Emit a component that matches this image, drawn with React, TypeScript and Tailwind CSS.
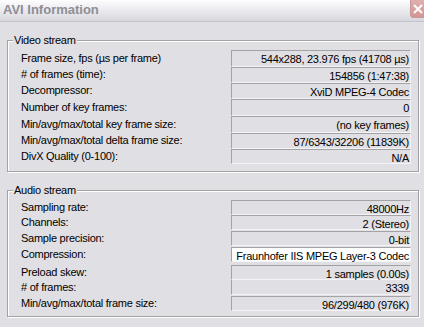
import React from "react";

type Row = {
    label: string;
    value: string;
    h: string;
    mt?: string;
    white?: boolean;
    partialTop?: boolean;
};

const videoRows: Row[] = [
    { label: "Frame size, fps (µs per frame)", value: "544x288, 23.976 fps (41708 µs)", h: "h-[17px]" },
    { label: "# of frames (time):", value: "154856 (1:47:38)", h: "h-[16px]" },
    { label: "Decompressor:", value: "XviD MPEG-4 Codec", h: "h-[16px]" },
    { label: "Number of key frames:", value: "0", h: "h-[17px]" },
    { label: "Min/avg/max/total key frame size:", value: "(no key frames)", h: "h-[17px]" },
    { label: "Min/avg/max/total delta frame size:", value: "87/6343/32206 (11839K)", h: "h-[16px]" },
    { label: "DivX Quality (0-100):", value: "N/A", h: "h-[15px]" },
];

const audioRows: Row[] = [
    { label: "Sampling rate:", value: "48000Hz", h: "h-[15px]" },
    { label: "Channels:", value: "2 (Stereo)", h: "h-[15px]" },
    { label: "Sample precision:", value: "0-bit", h: "h-[15px]", mt: "mt-px" },
    { label: "Compression:", value: "Fraunhofer IIS MPEG Layer-3 Codec", h: "h-[15px]", mt: "mt-px", white: true },
    { label: "Preload skew:", value: "1 samples (0.00s)", h: "h-[15px]", mt: "mt-[3px]" },
    { label: "# of frames:", value: "3339", h: "h-[15px]", partialTop: true },
    { label: "Min/avg/max/total frame size:", value: "96/299/480 (976K)", h: "h-[15px]", mt: "mt-px" },
];

const InfoRow = ({ row }: { row: Row }) => (
    <div className={`flex items-center ${row.h} ${row.mt ?? ""}`}>
        <span className="flex-1 pl-[13px] -mt-px">{row.label}</span>
        <div
            className={`flex flex-col w-[180px] h-full border-l border-b border-r border-l-[#a3a3a6] border-b-[#f4f4f6] border-r-[#f4f4f6] ${row.partialTop ? "" : "border-t border-t-[#a3a3a6]"} ${row.white ? "bg-white" : ""}`}
        >
            {row.partialTop && <div className="h-px w-[118px] bg-[#a3a3a6]" />}
            <div className="flex-1 flex items-center justify-end pr-[1px] whitespace-nowrap">
                {row.value}
            </div>
        </div>
    </div>
);

const GroupBox = ({ title, rows, className }: { title: string; rows: Row[]; className: string }) => (
    <div className={`ml-[7px] mr-[5px] border border-[#a3a3a6] shadow-[inset_1px_1px_0_#fff,1px_1px_0_#fff] pr-[7px] ${className}`}>
        <div className="w-fit -mt-[7px] ml-[5px] px-[1px] leading-[13px] bg-[#e0dfe3]">{title}</div>
        <div className="flex flex-col mt-[3px]">
            {rows.map((r) => (
                <InfoRow key={r.label} row={r} />
            ))}
        </div>
    </div>
);

const App = () => {
    return (
        <div className="w-[424px] h-[327px] overflow-hidden bg-[#e0dfe3] text-[11px] tracking-[-0.25px] text-black font-['Liberation_Sans',Arial,sans-serif]">
            {/* title bar (inactive XP silver) */}
            <div className="flex items-center justify-between h-[22px] border-b border-[#c4c4cc] bg-gradient-to-b from-[#fdfdfe] to-[#d7d7de]">
                <span className="pl-[3px] -mt-[2px] text-[13px] font-bold tracking-normal text-[#8e8e96]">AVI Information</span>
                <div className="self-start -mt-[3px] -mr-[8px] w-[22px] h-[21px] rounded-[3px] border border-[#c49a9a] bg-gradient-to-b from-[#e2b2b2] to-[#d49494] flex items-center justify-center">
                    <svg width="12" height="12" viewBox="0 0 12 12" className="-ml-[6px] mt-[2px]">
                        <path d="M2 2 L10 10 M10 2 L2 10" stroke="#fff" strokeWidth="2" />
                    </svg>
                </div>
            </div>

            <GroupBox title="Video stream" rows={videoRows} className="mt-[18px] pb-[7px]" />
            <GroupBox title="Audio stream" rows={audioRows} className="mt-[18px] pb-[5px]" />
        </div>
    );
};

export default App;
